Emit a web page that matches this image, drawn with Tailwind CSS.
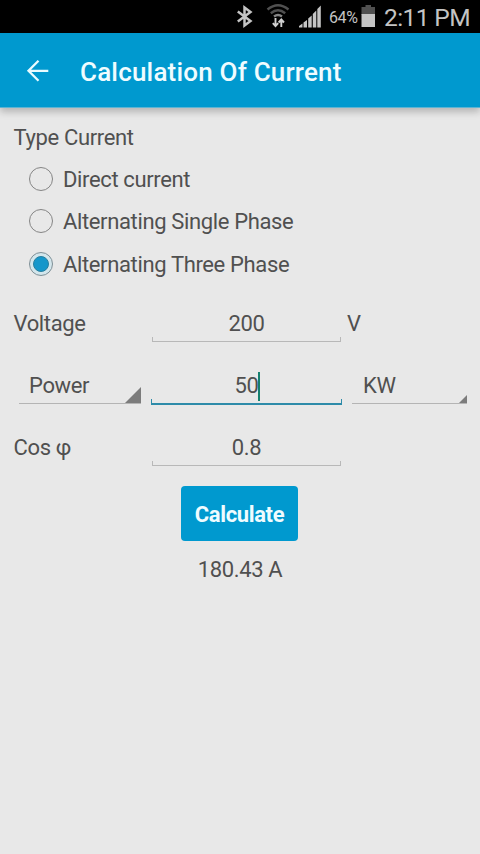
<!DOCTYPE html>
<html lang="en">
<head>
<meta charset="utf-8">
<title>Calculation Of Current</title>
<script src="https://cdn.jsdelivr.net/npm/@tailwindcss/browser@4"></script>
</head>
<body class="bg-[#e8e8e8]">
<div class="flex h-[854px] w-[480px] flex-col overflow-hidden bg-[#e8e8e8] font-[Roboto,sans-serif] text-[22px] leading-[26px] tracking-[-0.360px] text-[#505050]">
  <div class="flex h-[33px] shrink-0 items-center bg-black pl-[236px] text-[#c4c4c4]">
    <svg class="h-[33px] w-[93px] shrink-0" viewBox="236 0 93 33" fill="none">
      <path d="M237.800 11.500 250.500 21 244.500 25.500V7.500l6 4.500-12.700 9.500" stroke="#c4c4c4" stroke-width="2.500"/>
      <g stroke="#505050" stroke-width="2.400">
        <path d="M267.500 9.500q10.500-8.500 21 0"/>
        <path d="M270.800 13.200q7.200-5.800 14.400 0"/>
        <path d="M274 16.500q4-3 8 0" stroke="#858585"/>
      </g>
      <path d="M275.500 18v8M272.800 23.200l2.700 3 2.700-3M281.300 27v-7M278.600 22.500l2.700-3 2.700 3" stroke="#d0d0d0" stroke-width="1.900"/>
      <path d="M299 27.500v-1.500l3.500-2.500v4zM303.500 27.500v-5l3.500-2.500v7.500zM308.200 27.500v-9l3.500-3v12zM312.800 27.500V14l3.500-3.500v17zM317.300 27.500V9l3.500-3.500v22z" fill="#c4c4c4"/>
    </svg>
    <span class="w-[32px] pt-[3px] text-[16px] tracking-[-0.4px]">64%</span>
    <svg class="h-[33px] w-[15px] shrink-0" viewBox="361 0 15 33">
      <path d="M365.500 5h5.500v2h4v8h-13.500V7h4z" fill="#505050"/>
      <path d="M361.500 14h13.500v13h-13.500z" fill="#c4c4c4"/>
    </svg>
    <span class="whitespace-nowrap pl-[8px] pt-[3px] text-[24.500px] tracking-[-0.6px]">2:11 PM</span>
  </div>
  <header class="z-10 flex h-[75px] shrink-0 items-center border-b border-[#5db4d3] bg-[#0099cf] pl-[26px] text-white shadow-[0_4px_7px_rgba(0,0,0,0.22)]">
    <svg class="h-[24px] w-[24px]" viewBox="0 0 24 24" fill="none" stroke="#e8fbff" stroke-width="2.300"><path d="M22.300 12.800H2.500M12.500 2.800l-10 10 10 10"/></svg>
    <h1 class="pl-[30px] pt-[3px] text-[26px] leading-[30px] font-medium tracking-[0.190px] text-[#effcff]">Calculation Of Current</h1>
  </header>
  <main class="flex flex-col pt-[8px]">
    <h2 class="flex h-[42px] items-center pl-[13.500px] pt-[1px]">Type Current</h2>
    <div class="-mt-px flex flex-col pl-[29px]">
      <label class="flex h-[43px] items-center gap-[10px]"><span class="size-[24px] rounded-full border border-[#858585]"></span><span class="pt-[2px]">Direct current</span></label>
      <label class="flex h-[42px] items-center gap-[10px]"><span class="size-[24px] rounded-full border border-[#858585]"></span><span class="pt-[2px]">Alternating Single Phase</span></label>
      <label class="flex h-[44px] items-center gap-[10px]"><span class="flex size-[24px] items-center justify-center rounded-full border border-[#7f8f96] bg-[#d3e6ec]"><span class="size-[16px] rounded-full border border-[#287f9e] bg-[#1597cb]"></span></span><span class="pt-[2px]">Alternating Three Phase</span></label>
    </div>
    <div class="mt-[7px] grid grid-cols-[151px_191px_138px] grid-rows-[62px_62px_62px]">
      <div class="pl-[13.500px] pt-[18px]">Voltage</div>
      <div class="px-[1px] pt-[18px] text-center"><div>200</div><div class="h-[5px] border-x border-b border-[#b8b8b8]"></div></div>
      <div class="pl-[5px] pt-[18px]">V</div>

      <div class="pl-[19px] pt-[18px]">
        <div class="flex h-[31px] w-[122px] items-end justify-between border-b border-[#b4b4b4]">
          <span class="mb-[4px] pl-[10px]">Power</span>
          <svg class="h-[16px] w-[16px]" viewBox="0 0 16 16"><path d="M16 0v16H0z" fill="#7c7c7c"/></svg>
        </div>
      </div>
      <div class="pt-[18px] text-center"><div class="flex items-center justify-center pl-[1px]"><span>50</span><span class="-my-[2px] -ml-px h-[29px] w-[2px] bg-[#15806f]"></span></div><div class="h-[6px] border-x border-b-2 border-[#2d8ba9]"></div></div>
      <div class="pl-[10px] pt-[18px]">
        <div class="flex h-[31px] w-[115px] items-end justify-between border-b border-[#b4b4b4]">
          <span class="mb-[4px] pl-[11px]">KW</span>
          <svg class="h-[8px] w-[8px]" viewBox="0 0 8 8"><path d="M8 0v8H0z" fill="#7c7c7c"/></svg>
        </div>
      </div>

      <div class="pl-[13.500px] pt-[18px]">Cos φ</div>
      <div class="px-[1px] pt-[18px] text-center"><div>0.8</div><div class="h-[5px] border-x border-b border-[#b8b8b8]"></div></div>
      <div></div>
    </div>
    <button class="mt-[7px] ml-[181px] h-[55px] w-[117px] rounded-[4px] bg-[#0099cf] pt-[2px] font-bold text-[#effcff]">Calculate</button>
    <output class="flex h-[58px] items-center justify-center">180.43 A</output>
  </main>
</div>
</body>
</html>
